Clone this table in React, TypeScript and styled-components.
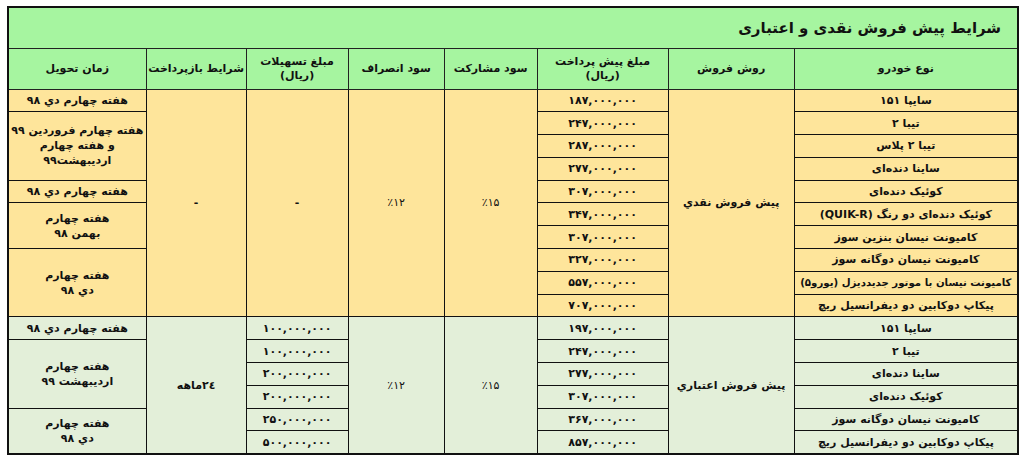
import React from "react";
import styled, { createGlobalStyle } from "styled-components";

type Sale = {
  car: string;
  price: string;
  loan?: string;
  delivery?: { text: string[]; span: number };
};

const cash: Sale[] = [
  { car: "سایپا ۱۵۱", price: "۱۸۷,۰۰۰,۰۰۰", delivery: { text: ["هفته چهارم دي ۹۸"], span: 1 } },
  {
    car: "تیبا ۲",
    price: "۲۴۷,۰۰۰,۰۰۰",
    delivery: { text: ["هفته چهارم فروردین ۹۹", "و هفته چهارم", "اردیبهشت۹۹"], span: 3 },
  },
  { car: "تیبا ۲ پلاس", price: "۲۸۷,۰۰۰,۰۰۰" },
  { car: "ساینا دنده‌ای", price: "۲۷۷,۰۰۰,۰۰۰" },
  { car: "کوئیک دنده‌ای", price: "۳۰۷,۰۰۰,۰۰۰", delivery: { text: ["هفته چهارم دي ۹۸"], span: 1 } },
  {
    car: "کوئیک دنده‌ای دو رنگ (QUIK-R)",
    price: "۳۴۷,۰۰۰,۰۰۰",
    delivery: { text: ["هفته چهارم", "بهمن ۹۸"], span: 2 },
  },
  { car: "کامیونت نیسان بنزین سوز", price: "۳۰۷,۰۰۰,۰۰۰" },
  {
    car: "کامیونت نیسان دوگانه سوز",
    price: "۳۲۷,۰۰۰,۰۰۰",
    delivery: { text: ["هفته چهارم", "دي ۹۸"], span: 3 },
  },
  { car: "کامیونت نیسان با موتور جدیددیزل (یورو۵)", price: "۵۵۷,۰۰۰,۰۰۰" },
  { car: "پیکاپ دوکابین دو دیفرانسیل ریچ", price: "۷۰۷,۰۰۰,۰۰۰" },
];

const credit: Sale[] = [
  {
    car: "سایپا ۱۵۱",
    price: "۱۹۷,۰۰۰,۰۰۰",
    loan: "۱۰۰,۰۰۰,۰۰۰",
    delivery: { text: ["هفته چهارم دي ۹۸"], span: 1 },
  },
  {
    car: "تیبا ۲",
    price: "۲۴۷,۰۰۰,۰۰۰",
    loan: "۱۰۰,۰۰۰,۰۰۰",
    delivery: { text: ["هفته چهارم", "اردیبهشت ۹۹"], span: 3 },
  },
  { car: "ساینا دنده‌ای", price: "۲۷۷,۰۰۰,۰۰۰", loan: "۲۰۰,۰۰۰,۰۰۰" },
  { car: "کوئیک دنده‌ای", price: "۳۰۷,۰۰۰,۰۰۰", loan: "۲۰۰,۰۰۰,۰۰۰" },
  {
    car: "کامیونت نیسان دوگانه سوز",
    price: "۳۶۷,۰۰۰,۰۰۰",
    loan: "۲۵۰,۰۰۰,۰۰۰",
    delivery: { text: ["هفته چهارم", "دي ۹۸"], span: 2 },
  },
  { car: "پیکاپ دوکابین دو دیفرانسیل ریچ", price: "۸۵۷,۰۰۰,۰۰۰", loan: "۵۰۰,۰۰۰,۰۰۰" },
];

const GREEN = "#a6f5a0";
const GOLD = "#fee59b";
const PALE = "#e3efd9";

const App = () => {
  const renderSection = (rows: Sale[], bg: string, method: string, repay: string) =>
    rows.map((r, i) => (
      <Row key={method + i}>
        <Cell $bg={bg} $size={r.car.length > 35 ? 10.2 : 11}>
          {r.car}
        </Cell>
        {i === 0 && (
          <Cell $bg={bg} rowSpan={rows.length}>
            {method}
          </Cell>
        )}
        <Cell $bg={bg}>{r.price}</Cell>
        {i === 0 && (
          <>
            <Cell $bg={bg} $light rowSpan={rows.length}>
              ٪۱۵
            </Cell>
            <Cell $bg={bg} $light rowSpan={rows.length}>
              ٪۱۲
            </Cell>
          </>
        )}
        {r.loan ? (
          <Cell $bg={bg}>{r.loan}</Cell>
        ) : (
          i === 0 && (
            <Cell $bg={bg} rowSpan={rows.length}>
              -
            </Cell>
          )
        )}
        {i === 0 && (
          <Cell $bg={bg} rowSpan={rows.length}>
            {repay}
          </Cell>
        )}
        {r.delivery && (
          <Cell $bg={bg} rowSpan={r.delivery.span}>
            {r.delivery.text.map((t, k) => (
              <Line key={k}>{t}</Line>
            ))}
          </Cell>
        )}
      </Row>
    ));

  return (
    <>
      <GlobalStyle />
      <Page>
        <Table>
          <colgroup>
            <col style={{ width: 224 }} />
            <col style={{ width: 126 }} />
            <col style={{ width: 131 }} />
            <col style={{ width: 93 }} />
            <col style={{ width: 96 }} />
            <col style={{ width: 102 }} />
            <col style={{ width: 100 }} />
            <col style={{ width: 138 }} />
          </colgroup>
          <tbody>
            <TitleRow>
              <Title colSpan={8}>شرایط پیش فروش نقدی و اعتباری</Title>
            </TitleRow>
            <HeadRow>
              <Head>نوع خودرو</Head>
              <Head>روش فروش</Head>
              <Head>
                <Line>مبلغ پیش پرداخت</Line>
                <Line>(ریال)</Line>
              </Head>
              <Head>سود مشارکت</Head>
              <Head>سود انصراف</Head>
              <Head>
                <Line>مبلغ تسهیلات</Line>
                <Line>(ریال)</Line>
              </Head>
              <Head>شرایط بازپرداخت</Head>
              <Head>زمان تحویل</Head>
            </HeadRow>
            {renderSection(cash, GOLD, "پیش فروش نقدي", "-")}
            {renderSection(credit, PALE, "پیش فروش اعتباري", "۲٤ماهه")}
          </tbody>
        </Table>
      </Page>
    </>
  );
};

const GlobalStyle = createGlobalStyle`
  html, body {
    margin: 0;
    padding: 0;
    background: #ffffff;
  }
  body {
    font-family: "DejaVu Sans", "Noto Sans", sans-serif;
  }
`;

const Page = styled.div`
  padding: 6px 0 0 7px;
`;

const Table = styled.table`
  direction: rtl;
  width: 1010px;
  table-layout: fixed;
  border-collapse: collapse;
  border: 2px solid #111;
`;

const TitleRow = styled.tr`
  height: 41px;
`;

const Title = styled.td`
  background: ${GREEN};
  text-align: right;
  padding: 0 16px 0 0;
  font-size: 15px;
  font-weight: bold;
  color: #111;
  border: 1px solid #222;
`;

const HeadRow = styled.tr`
  height: 41px;
`;

const Head = styled.td`
  background: ${GREEN};
  text-align: center;
  vertical-align: middle;
  font-size: 11px;
  font-weight: bold;
  color: #111;
  border: 1px solid #222;
  padding: 0;
  line-height: 14px;
  white-space: nowrap;
`;

const Row = styled.tr`
  height: 22.8px;
`;

const Cell = styled.td<{ $bg: string; $light?: boolean; $size?: number }>`
  background: ${(p) => p.$bg};
  text-align: center;
  vertical-align: middle;
  font-size: ${(p) => p.$size ?? 11}px;
  font-weight: ${(p) => (p.$light ? "normal" : "bold")};
  color: #111;
  border: 1px solid #111;
  padding: 0;
  line-height: 15px;
  white-space: nowrap;
  overflow: hidden;
`;

const Line = styled.div`
  display: block;
`;

export default App;
